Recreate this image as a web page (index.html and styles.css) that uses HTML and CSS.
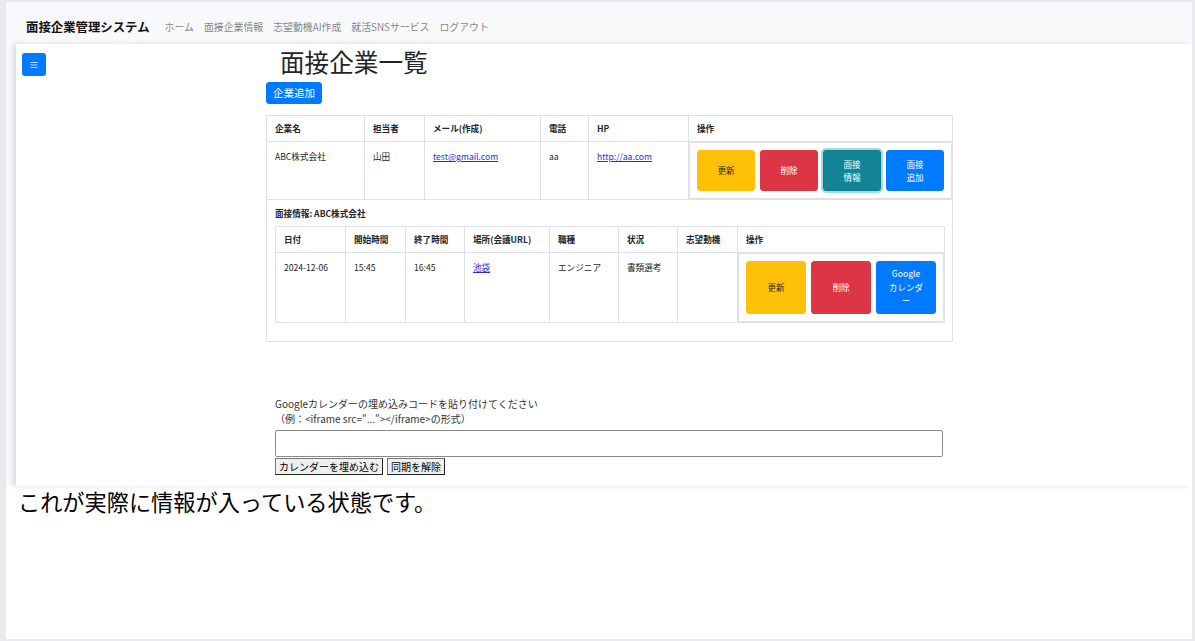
FILE: index.html
```html
<!DOCTYPE html>
<html lang="ja">
<head>
<meta charset="utf-8">
<title>面接企業一覧</title>
<link rel="stylesheet" href="styles.css">
</head>
<body>
<div class="frame">
  <nav class="navbar">
    <span class="brand">面接企業管理システム</span>
    <a class="nav-link">ホーム</a>
    <a class="nav-link">面接企業情報</a>
    <a class="nav-link">志望動機AI作成</a>
    <a class="nav-link">就活SNSサービス</a>
    <a class="nav-link">ログアウト</a>
  </nav>
  <div class="area">
    <div class="panel">
      <div class="sidebar">
        <button class="toggle" aria-label="menu">
          <svg width="24" height="23" viewBox="0 0 24 23"><path d="M8.5 9.5h7M8.5 12h7M8.5 14.5h7" stroke="#e8f1ff" stroke-width="0.8" fill="none"/></svg>
        </button>
      </div>
      <div class="main">
        <h1 class="title">面接企業一覧</h1>
        <button class="btn btn-primary add-btn">企業追加</button>
        <table class="tbl outer">
          <colgroup><col style="width:98px"><col style="width:60px"><col style="width:116px"><col style="width:48px"><col style="width:100px"><col style="width:264px"></colgroup>
          <thead>
            <tr><th>企業名</th><th>担当者</th><th>メール(作成)</th><th>電話</th><th>HP</th><th>操作</th></tr>
          </thead>
          <tbody>
            <tr>
              <td>ABC株式会社</td>
              <td>山田</td>
              <td><a class="lnk">test@gmail.com</a></td>
              <td>aa</td>
              <td><a class="lnk">http://aa.com</a></td>
              <td class="act">
                <div class="act-box">
                  <button class="btn sq btn-warning">更新</button>
                  <button class="btn sq btn-danger">削除</button>
                  <button class="btn sq btn-info focus">面接<br>情報</button>
                  <button class="btn sq btn-primary">面接<br>追加</button>
                </div>
              </td>
            </tr>
            <tr>
              <td colspan="6" class="nested">
                <div class="nested-title">面接情報: ABC株式会社</div>
                <table class="tbl inner">
                  <colgroup><col style="width:70px"><col style="width:60px"><col style="width:59px"><col style="width:85px"><col style="width:69px"><col style="width:59px"><col style="width:60px"><col style="width:207px"></colgroup>
                  <thead>
                    <tr><th>日付</th><th>開始時間</th><th>終了時間</th><th>場所(会議URL)</th><th>職種</th><th>状況</th><th>志望動機</th><th>操作</th></tr>
                  </thead>
                  <tbody>
                    <tr>
                      <td>2024-12-06</td>
                      <td>15:45</td>
                      <td>16:45</td>
                      <td><a class="lnk">池袋</a></td>
                      <td>エンジニア</td>
                      <td>書類選考</td>
                      <td></td>
                      <td class="act">
                        <div class="act-box tall">
                          <button class="btn sq btn-warning">更新</button>
                          <button class="btn sq btn-danger">削除</button>
                          <button class="btn sq btn-primary">Google<br>カレンダ<br>ー</button>
                        </div>
                      </td>
                    </tr>
                  </tbody>
                </table>
              </td>
            </tr>
          </tbody>
        </table>
        <div class="cal">
          <p class="cal-text">Googleカレンダーの埋め込みコードを貼り付けてください<br>（例：&lt;iframe src="..."&gt;&lt;/iframe&gt;の形式）</p>
          <input class="cal-input" type="text">
          <div class="cal-btns">
            <button class="plain">カレンダーを埋め込む</button>
            <button class="plain">同期を解除</button>
          </div>
        </div>
      </div>
    </div>
  </div>
  <p class="note">これが実際に情報が入っている状態です。</p>
</div>
</body>
</html>
```

FILE: styles.css
```css
* { box-sizing: border-box; }
html, body { margin: 0; padding: 0; }
body {
  background: #e9eaee;
  font-family: "Noto Sans CJK JP", sans-serif;
  color: #212529;
  height: 641px;
  overflow: hidden;
}
.frame {
  margin: 2px 3px 0 6px;
  height: 637px;
  background: #fff;
  overflow: hidden;
}
.navbar {
  height: 42px;
  background: #f8f9fa;
  display: flex;
  align-items: center;
  padding: 8px 0 0 20px;
  gap: 10px;
}
.brand {
  font-weight: 700;
  font-size: 12.4px;
  color: #111;
  margin-right: 5px;
}
.nav-link {
  font-size: 9.9px;
  color: rgba(0,0,0,.5);
}
.area {
  background: #f8f9fa;
}
.panel {
  margin-left: 10px;
  background: #fff;
  box-shadow: -3px 0 5px rgba(0,0,0,.12);
  display: flex;
}
.sidebar {
  width: 250px;
  padding: 9px 0 0 6px;
}
.toggle {
  width: 24px;
  height: 23px;
  padding: 0;
  border: 0;
  border-radius: 3px;
  background: #007bff;
  display: block;
}
.toggle svg { display: block; }
.main {
  width: 686px;
  padding: 2px 0 11px;
}
.title {
  margin: 0;
  padding-left: 14px;
  font-weight: 400;
  font-size: 24.6px;
  line-height: 30px;
  color: #212529;
}
.btn {
  border: 1px solid transparent;
  border-radius: 3px;
  font-family: "Noto Sans CJK JP", sans-serif;
  color: #fff;
  padding: 0;
}
.btn-primary { background: #007bff; border-color: #007bff; }
.btn-warning { background: #ffc107; border-color: #ffc107; color: #212529; }
.btn-danger { background: #dc3545; border-color: #dc3545; }
.btn-info { background: #138496; border-color: #117a8b; }
.btn-info.focus { box-shadow: 0 0 0 2px rgba(58,176,195,.45); }
.add-btn {
  display: block;
  margin-top: 6px;
  height: 22px;
  width: 56px;
  font-size: 10.5px;
  line-height: 16px;
}
.tbl {
  border-collapse: collapse;
  table-layout: fixed;
  font-size: 8.6px;
  line-height: 12px;
}
.tbl th, .tbl td {
  border: 1px solid #dee2e6;
  text-align: left;
  vertical-align: top;
}
.tbl th {
  padding: 6px 8px 7px;
  font-weight: 700;
}
.tbl td {
  padding: 8px 8px;
}
.outer {
  margin-top: 11px;
  width: 686px;
}
.inner {
  width: 669px;
  margin: 7px 0 9px;
}
.tbl td.act { padding: 0; }
.act-box {
  border: 1px solid #dee2e6;
  padding: 7px;
  display: flex;
  gap: 5px;
}
.sq {
  width: 58px;
  height: 41px;
  font-size: 8.6px;
  line-height: 12.5px;
}
.act-box.tall .sq {
  width: 60px;
  height: 53px;
  line-height: 13.5px;
}
.tbl td.nested {
  padding: 7px 8px 9px 8px;
}
.nested-title {
  font-weight: 700;
  font-size: 8.6px;
  line-height: 12px;
}
.lnk {
  color: #2a2ae6;
  text-decoration: underline;
}
.cal {
  padding-left: 9px;
  margin-top: 54px;
}
.cal-text {
  margin: 0;
  font-size: 10px;
  line-height: 15px;
  color: #333;
}
.cal-input {
  display: block;
  margin-top: 4px;
  width: 668px;
  height: 27px;
  border: 1px solid #8a8a8a;
  border-radius: 2px;
  background: #fff;
}
.cal-btns {
  display: flex;
  gap: 4px;
  margin-top: 1px;
}
.plain {
  height: 17px;
  padding: 0 3px;
  font-family: "Noto Sans CJK JP", sans-serif;
  font-size: 10px;
  line-height: 15px;
  background: #efefef;
  color: #000;
  border: 1px solid #222;
  border-top-color: #777;
  border-left-color: #777;
  border-radius: 0;
}
.note {
  margin: 0 0 0 12px;
  font-size: 22.2px;
  line-height: 30px;
  color: #000;
}
```
